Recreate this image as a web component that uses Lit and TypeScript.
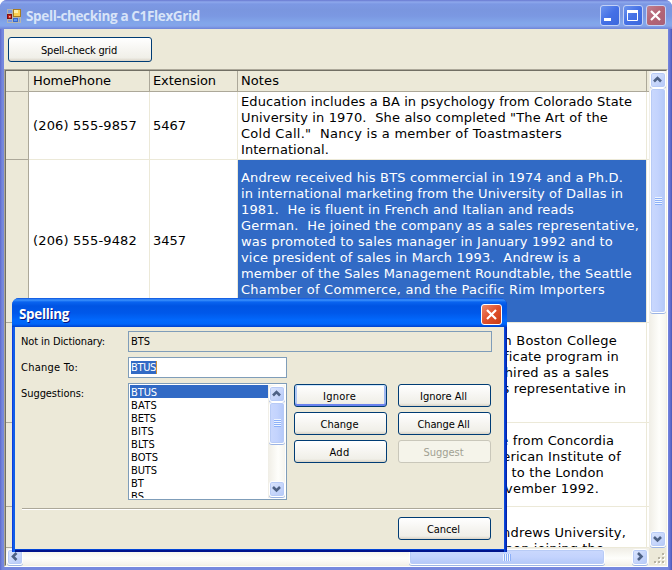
import { LitElement, html, css, svg } from "lit";
import { customElement, property } from "lit/decorators.js";
import { classMap } from "lit/directives/class-map.js";
import { styleMap } from "lit/directives/style-map.js";

// One line of text, tracked so that it spans exactly `w` pixels.
@customElement("fit-text")
class FitText extends LitElement {
  @property({ type: Number }) w = 0;
  @property() text = "";
  static styles = css`
    :host { display: block; white-space: pre; }
    .t { display: inline-block; white-space: pre; }
  `;
  render() {
    return html`<span class="t">${this.text}</span>`;
  }
  updated() {
    const s = this.renderRoot.querySelector(".t") as HTMLElement;
    s.style.letterSpacing = "0px";
    const gap = (this.w - s.getBoundingClientRect().width) / this.text.length;
    s.style.letterSpacing = `${gap}px`;
  }
}

const ARROWS: Record<string, string> = {
  up: "M4 9.5 L7.5 6 L11 9.5",
  down: "M4 6 L7.5 9.5 L11 6",
  left: "M9.5 4 L6 7.5 L9.5 11",
  right: "M6 4 L9.5 7.5 L6 11",
};

@customElement("scroll-bar")
class ScrollBar extends LitElement {
  @property({ type: Boolean, reflect: true }) horizontal = false;
  @property({ type: Number }) start = 0;
  @property({ type: Number }) size = 40;
  static styles = css`
    :host { display: flex; flex-direction: column; width: 17px; box-sizing: border-box; padding: 1px 0 1px 1px;
      background: linear-gradient(90deg, #f0eee6, #fefefb 60%, #f6f5ef); }
    :host([horizontal]) { flex-direction: row; width: auto; height: 17px; padding: 1px 1px 0 1px;
      background: linear-gradient(180deg, #f0eee6, #fefefb 60%, #f3f1ea); }
    .b, .th { box-sizing: border-box; flex: none; border: 1px solid #fff; border-radius: 3px;
      box-shadow: inset 0 0 0 1px #b8cbf6, 0 1px 0 #9cb4e4; background: linear-gradient(135deg, #dce6fe, #b4c8f8); }
    .b { width: 16px; height: 16px; display: flex; }
    .b svg { width: 15px; height: 15px; margin: -1px; flex: none; }
    .b path { fill: none; stroke: #4d6185; stroke-width: 2.6; }
    .track { flex: 1; display: flex; flex-direction: inherit; min-height: 0; min-width: 0; }
    .th { width: 16px; display: flex; align-items: center; justify-content: center;
      background: linear-gradient(90deg, #cad8fd, #c3d3fd 50%, #b3c8f8); }
    :host([horizontal]) .th { width: auto; height: 16px; background: linear-gradient(180deg, #cad8fd, #c3d3fd 50%, #b3c8f8); }
    .grip { width: 7px; height: 8px; background: repeating-linear-gradient(180deg, #eef4fe 0 1px, #8cb0f8 1px 2px); }
    :host([horizontal]) .grip { width: 8px; height: 7px; background: repeating-linear-gradient(90deg, #eef4fe 0 1px, #8cb0f8 1px 2px); }
  `;
  arrow(d: string) {
    return html`<div class="b"><svg viewBox="0 0 15 15">${svg`<path d=${ARROWS[d]}></path>`}</svg></div>`;
  }
  render() {
    const h = this.horizontal;
    const st = h
      ? { marginLeft: `${this.start}px`, width: `${this.size}px` }
      : { marginTop: `${this.start}px`, height: `${this.size}px` };
    return html`${this.arrow(h ? "left" : "up")}
      <div class="track"><div class="th" style=${styleMap(st)}><div class="grip"></div></div></div>
      ${this.arrow(h ? "right" : "down")}`;
  }
}

@customElement("xp-button")
class XpButton extends LitElement {
  @property() label = "";
  @property({ type: Number }) w = 40;
  @property({ type: Boolean, reflect: true }) focused = false;
  @property({ type: Boolean, reflect: true }) disabled = false;
  static styles = css`
    :host { display: flex; align-items: center; justify-content: center; box-sizing: border-box;
      border: 1px solid #003c74; border-radius: 3px; height: 23px; color: #000; padding: 2px 2px 0 0;
      background: linear-gradient(180deg, #fff, #f6f5f1 50%, #f0efe8 86%, #d9d3c6); }
    :host([focused]) { box-shadow: inset 0 1px 0 #cee7ff, inset 0 -2px 0 #6982ee, inset 2px 0 0 #b0c8f4, inset -2px 0 0 #a0b8f0; }
    :host([disabled]) { border-color: #c9c7ba; background: #f5f4ea; color: #a1a192; }
  `;
  render() {
    return html`<fit-text .text=${this.label} .w=${this.w}></fit-text>`;
  }
}

type Line = [string, number];
interface Row { h: number; pad: number; phone: string; ext: string; sel?: boolean; notes: Line[]; }

const ROWS: Row[] = [
  { h: 68, pad: 2, phone: "(206) 555-9857", ext: "5467", notes: [
    ["Education includes a BA in psychology from Colorado State", 391],
    ["University in 1970.  She also completed \"The Art of the", 367],
    ["Cold Call.\"  Nancy is a member of Toastmasters", 321],
    ["International.", 88] ] },
  { h: 163, pad: 10, phone: "(206) 555-9482", ext: "3457", sel: true, notes: [
    ["Andrew received his BTS commercial in 1974 and a Ph.D.", 382],
    ["in international marketing from the University of Dallas in", 382],
    ["1981.  He is fluent in French and Italian and reads", 333],
    ["German.  He joined the company as a sales representative,", 398],
    ["was promoted to sales manager in January 1992 and to", 372],
    ["vice president of sales in March 1993.  Andrew is a", 340],
    ["member of the Sales Management Roundtable, the Seattle", 391],
    ["Chamber of Commerce, and the Pacific Rim Importers", 364] ] },
  { h: 100, pad: 10, phone: "(206) 555-3412", ext: "3355", notes: [
    ["Janet has a BS degree in chemistry from Boston College", 376],
    ["(1984).  She has also completed a certificate program in", 378],
    ["food retailing management.  Janet was hired as a sales", 368],
    ["associate in 1991 and promoted to sales representative in", 385] ] },
  { h: 84, pad: 10, phone: "(206) 555-8122", ext: "5176", notes: [
    ["Margaret holds a BA in English literature from Concordia", 373],
    ["College (1958) and an MA from the American Institute of", 380],
    ["Culinary Arts (1966).  She was assigned to the London", 363],
    ["office temporarily from July through November 1992.", 358] ] },
  { h: 41, pad: 18, phone: "", ext: "", notes: [
    ["Steven Buchanan graduated from St. Andrews University,", 385],
    ["Scotland, with a BSC degree in 1976.  Upon joining the", 363] ] },
];

const WORDS: Line[] = [["BTUS", 26], ["BATS", 26], ["BETS", 25], ["BITS", 23], ["BLTS", 24],
  ["BOTS", 27], ["BUTS", 26], ["BT", 13], ["BS", 13]];

const cross = svg`<path d="M5 5 L14 14 M14 5 L5 14" fill="none" stroke="#fff" stroke-width="2.2"></path>`;

@customElement("app-root")
class AppRoot extends LitElement {
  static styles = css`
    :host { display: block; width: 672px; height: 570px; overflow: hidden; background: #fff; position: relative;
      font: 11px/13px "DejaVu Sans Condensed", "DejaVu Sans", sans-serif; color: #000; }
    .win { height: 570px; box-sizing: border-box; display: flex; flex-direction: column; border-radius: 7px 7px 0 0; overflow: hidden;
      background: linear-gradient(90deg, #5c68cc, #7486dc 2px, #7688de 4px, #7688de 668px, #6472d4 670px, #4a58b4); }
    .title { height: 29px; flex: none; display: flex; align-items: center; box-sizing: border-box; padding: 2px 6px 0 7px;
      background: linear-gradient(180deg, #6878d0 0, #8ea8ec 2px, #7c98e4 4px, #7a96df 10px, #7b98e2 16px, #82a6ea 23px, #84a4ea 26px, #6f84d8 29px); }
    .title .cap { margin-left: 5px; flex: 1; color: #d8e4f8; }
    .cap { font: bold 13.5px/18px "Open Sans", "Noto Sans", sans-serif; }
    .ico { width: 14px; height: 14px; flex: none; }
    .ctl { width: 20px; height: 21px; margin-left: 3px; box-sizing: border-box; border: 1px solid #c4d2f6; border-radius: 3px;
      background: linear-gradient(135deg, #6c94ee, #4470e6 50%, #3c68dc); display: flex; }
    .ctl svg { width: 19px; height: 19px; margin: 0 -1px 0 -1px; flex: none; }
    .ctl.x { background: linear-gradient(135deg, #c08090, #b46474 50%, #a86078); }
    .body { flex: 1; margin: 0 4px 3px; display: flex; flex-direction: column; background: #ece9d8; min-height: 0; }
    .bar { height: 40px; flex: none; box-sizing: border-box; padding: 8px 4px; }
    .bar xp-button { width: 144px; height: 25px; }
    .grid { flex: 1; min-height: 0; box-sizing: border-box; border: 1px solid; border-color: #aca899 #fff #fff #aca899; display: flex; }
    .inner { flex: 1; border: 1px solid; border-color: #716f64 #f1efe2 #f1efe2 #716f64; display: grid;
      grid-template: minmax(0, 1fr) 17px / minmax(0, 1fr) 17px; min-height: 0; }
    .cells { overflow: hidden; background: #fff; font: 13px/16px "DejaVu Sans", sans-serif; }
    .r { display: grid; grid-template-columns: 23px 121px 88px 409px 1fr; box-sizing: border-box; }
    .r > div { box-sizing: border-box; border-right: 1px solid #ece9d8; border-bottom: 1px solid #ece9d8;
      padding-left: 3px; overflow: hidden; }
    .r > .rh, .r.head > div { background: #ece9d8; border-color: #aca899; }
    .r > div:last-child { border-right: 0; }
    .r.head { height: 21px; }
    .r.head > div { padding-top: 2px; }
    .mid { display: flex; align-items: center; }
    .r > div.first { padding-left: 4px; }
    .r > div.sel { background: #316ac5; color: #fff; }
    .corner { display: flex; align-items: flex-end; justify-content: flex-end; }
    .corner svg { width: 13px; height: 13px; }

    .dlg { position: absolute; left: 12px; top: 298px; width: 495px; height: 254px; box-sizing: border-box; border-radius: 7px 7px 0 0;
      overflow: hidden; display: flex; flex-direction: column; padding: 0 3px 3px;
      background: linear-gradient(90deg, #0831d9, #166aee 2px, #0855dd 3px, #0855dd 492px, #0a3cd8 493px, #001d98); }
    .dt { height: 29px; flex: none; margin: 0 -3px; padding: 3px 5px 0 7px; display: flex; align-items: center; box-sizing: border-box;
      background: linear-gradient(180deg, #0a50dc 0, #3c92fc 2px, #0a64f0 4px, #0054e3 8px, #0058ea 15px, #0268fc 22px, #0066fa 26px, #0040cc 29px); }
    .dt .cap { flex: 1; color: #fff; text-shadow: 1px 1px 0 #0a1883; }
    .dt .ctl { border-color: #fff; background: linear-gradient(135deg, #ee8a6c, #e0502c 50%, #c83c14); width: 21px; }
    .dt .ctl svg { margin: 0; }
    .db { flex: 1; background: #ece9d8; box-sizing: border-box; padding: 4px 12px 0 6px; box-shadow: 0 1px 0 #0447d8, 0 3px 0 #00138c; }
    .f { display: flex; margin-bottom: 5px; height: 21px; }
    .f > .lab { width: 107px; padding-top: 4px; box-sizing: border-box; }
    .box { box-sizing: border-box; border: 1px solid #7f9db9; height: 21px; padding: 3px 0 0 2px; }
    .ro { width: 364px; }
    .ed { width: 159px; background: #fff; }
    .hl { background: #316ac5; color: #fff; display: inline-block; border-right: 1px solid #ce953a; }
    .f.main { height: 117px; margin-bottom: 8px; }
    .list { width: 159px; box-sizing: border-box; border: 1px solid #7f9db9; background: #fff; padding: 1px; display: flex; overflow: hidden; }
    .items { flex: 1; overflow: hidden; }
    .items > div { height: 13px; line-height: 14px; padding-left: 1px; box-sizing: border-box; padding-top: 1px; }
    .items > .on { background: #316ac5; color: #fff; }
    .btns { display: grid; grid-template-columns: 93px 93px; gap: 5px 11px; margin: 1px 0 0 7px; align-content: start; }
    .sep { height: 1px; background: #aca899; border-bottom: 1px solid #fff; margin: 0 -10px 0 1px; }
    .foot { display: flex; justify-content: flex-end; padding: 7px 1px 0 0; }
    .foot xp-button { width: 93px; }
  `;

  cell(text: string, w: number) {
    return html`<fit-text .text=${text} .w=${w}></fit-text>`;
  }

  render() {
    return html`
      <div class="win">
        <div class="title">
          <svg class="ico" viewBox="0 0 14 14">
            <rect width="14" height="14" fill="#b4b4b0"></rect>
            <rect x="1" y="1" width="4" height="3" fill="#7c98e0"></rect>
            <rect x="6.5" y="0.5" width="7" height="7" fill="#fcd050" stroke="#a87c20"></rect>
            <rect x="7" y="1" width="4" height="3" fill="#fff0a8"></rect>
            <rect x="0.5" y="5.5" width="4" height="4" fill="#c82020" stroke="#801010"></rect>
            <rect x="2" y="7" width="1.5" height="1.5" fill="#f8a898"></rect>
            <rect x="1" y="11" width="4" height="2" fill="#7c98e0"></rect>
            <rect x="6.5" y="9.5" width="4" height="3" fill="#5c94f4" stroke="#3868c8"></rect>
            <rect x="12" y="9" width="1" height="4" fill="#7c98e0"></rect>
          </svg>
          <fit-text class="cap" .text=${"Spell-checking a C1FlexGrid"} .w=${174}></fit-text>
          <div class="ctl"><svg viewBox="0 0 19 19"><rect x="4" y="12" width="7" height="3" fill="#fff"></rect></svg></div>
          <div class="ctl"><svg viewBox="0 0 19 19"><path d="M4.5 5 V14.5 H14.5 V5" fill="none" stroke="#fff"></path><rect x="4" y="4" width="11" height="3" fill="#fff"></rect></svg></div>
          <div class="ctl x"><svg viewBox="0 0 19 19">${cross}</svg></div>
        </div>
        <div class="body">
          <div class="bar"><xp-button label="Spell-check grid" .w=${76}></xp-button></div>
          <div class="grid"><div class="inner">
            <div class="cells">
              <div class="r head">
                <div></div>
                <div class="first">${this.cell("HomePhone", 78)}</div>
                <div>${this.cell("Extension", 63)}</div>
                <div>${this.cell("Notes", 38)}</div>
                <div></div>
              </div>
              ${ROWS.map((r) => html`<div class="r" style=${styleMap({ height: `${r.h}px` })}>
                <div class="rh"></div>
                <div class="mid first">${this.cell(r.phone, 104)}</div>
                <div class="mid">${this.cell(r.ext, 33)}</div>
                <div class=${classMap({ sel: !!r.sel })} style=${styleMap({ paddingTop: `${r.pad}px` })}>
                  ${r.notes.map(([t, w]) => this.cell(t, w))}
                </div>
                <div></div>
              </div>`)}
            </div>
            <scroll-bar .start=${0} .size=${225}></scroll-bar>
            <scroll-bar horizontal .start=${386} .size=${196}></scroll-bar>
            <div class="corner"><svg viewBox="0 0 13 13">
              ${[[9, 1], [5, 5], [9, 5], [1, 9], [5, 9], [9, 9]].map(([x, y]) => svg`
                <rect x=${x + 1} y=${y + 1} width="2" height="2" fill="#fff"></rect>
                <rect x=${x} y=${y} width="2" height="2" fill="#b8b4a3"></rect>`)}
            </svg></div>
          </div></div>
        </div>
      </div>

      <div class="dlg">
        <div class="dt">
          <fit-text class="cap" .text=${"Spelling"} .w=${50}></fit-text>
          <div class="ctl"><svg viewBox="0 0 19 19">${cross}</svg></div>
        </div>
        <div class="db">
          <div class="f"><div class="lab">${this.cell("Not in Dictionary:", 84)}</div><div class="box ro">${this.cell("BTS", 19)}</div></div>
          <div class="f"><div class="lab">${this.cell("Change To:", 57)}</div>
            <div class="box ed"><span class="hl">${this.cell("BTUS", 25)}</span></div></div>
          <div class="f main"><div class="lab">${this.cell("Suggestions:", 63)}</div>
            <div class="list">
              <div class="items">${WORDS.map(([t, w], i) => html`<div class=${classMap({ on: i === 0 })}>${this.cell(t, w)}</div>`)}</div>
              <scroll-bar .start=${0} .size=${42}></scroll-bar>
            </div>
            <div class="btns">
              <xp-button focused label="Ignore" .w=${33}></xp-button>
              <xp-button label="Ignore All" .w=${47}></xp-button>
              <xp-button label="Change" .w=${38}></xp-button>
              <xp-button label="Change All" .w=${52}></xp-button>
              <xp-button label="Add" .w=${20}></xp-button>
              <xp-button disabled label="Suggest" .w=${40}></xp-button>
            </div>
          </div>
          <div class="sep"></div>
          <div class="foot"><xp-button label="Cancel" .w=${33}></xp-button></div>
        </div>
      </div>
    `;
  }
}
